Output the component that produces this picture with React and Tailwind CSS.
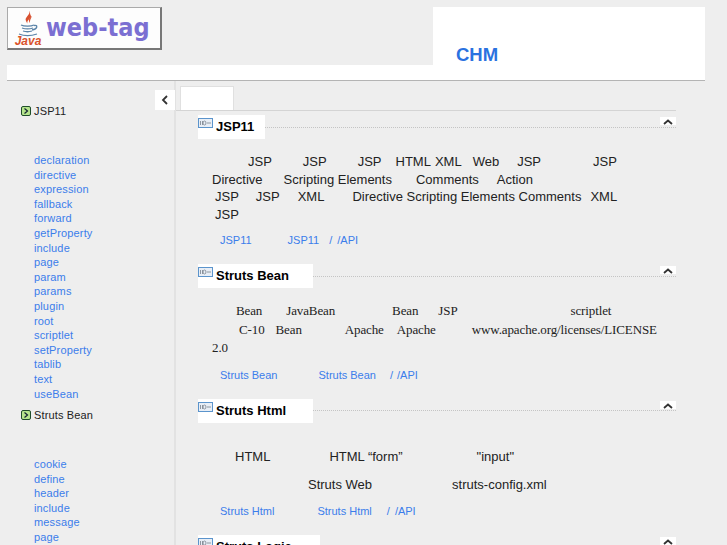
import React from 'react'

const TreeIcon = () => (
  <svg width="10" height="10" viewBox="0 0 10 10" className="shrink-0">
    <rect x="0.5" y="0.5" width="9" height="9" rx="1.5" fill="#b5e48c" stroke="#1f4d2a" />
    <path d="M3.5 2.5 L6.5 5 L3.5 7.5" fill="none" stroke="#123" strokeWidth="1.2" />
  </svg>
)

const SectionIcon = () => (
  <svg width="15" height="10" viewBox="0 0 15 10" className="shrink-0">
    <rect x="0.5" y="0.5" width="14" height="9" fill="#e8eef6" stroke="#5b94cc" />
    <path d="M2.5 3 v4 M4.5 3 v4 M6.5 3 a1.5 2 0 1 1 0 4 a1.5 2 0 1 1 0 -4 M9 5 h4" fill="none" stroke="#77808c" strokeWidth="0.8" />
  </svg>
)

const Chevron = () => (
  <svg width="10" height="6" viewBox="0 0 10 6">
    <path d="M1 5 L5 1.5 L9 5" fill="none" stroke="#333" strokeWidth="1.8" />
  </svg>
)

const JavaLogo = () => (
  <div className="flex flex-col items-center w-[24px] shrink-0">
    <svg width="24" height="27" viewBox="0 0 24 27">
      <path d="M13 1 C15 5 8 7 10 11 C10.500 12 11 13 11.500 13.500 C10 10 17 8 14.500 5 C14 3.500 14 2 13 1Z" fill="#d8502f" />
      <path d="M16 6 C13 8 12 10 14 13 C13.500 10.500 15 8.500 16 6Z" fill="#d8502f" />
      <g fill="none" stroke="#5a83a8" strokeWidth="1.3">
        <path d="M5 15 C8 16.500 15 16.500 18 15" />
        <path d="M6 18 C9 19 14 19 17 18" />
        <path d="M7 21 C10 22 13 22 16 21" />
        <path d="M3 24 C8 26 15 26 21 24" />
        <path d="M18 15.500 C22 14.500 22 19 16 20" />
      </g>
    </svg>
    <span className="font-['Liberation_Sans',sans-serif] font-bold italic text-[12px] leading-[11px] text-[#d9532c] -mt-px">Java</span>
  </div>
)

const SideTitle = ({ children }) => (
  <div className="flex items-center gap-[3px] pl-[21px] h-[14px] text-[11px] leading-[14px] text-[#222] tracking-[0.15px]">
    <TreeIcon />
    <span>{children}</span>
  </div>
)

const SideLinks = ({ items }) => (
  <ul className="pl-[34px]">
    {items.map((t, i) => (
      <li key={i} className="h-[14.6px] text-[11px] leading-[14.6px] text-[#3b7deb] tracking-[0.15px]">{t}</li>
    ))}
  </ul>
)

const SectionHead = ({ title, width }) => (
  <div className="relative flex items-center">
    <div className={`flex items-start bg-white h-[24px] ${width}`}>
      <div className="mt-[3px]"><SectionIcon /></div>
      <span className="ml-[3px] mt-[4px] text-[13px] leading-[16px] font-bold text-black whitespace-nowrap">{title}</span>
    </div>
    <div className="flex-1 border-t border-dotted border-[#c4c4c4]" />
    <div className="absolute right-0 top-[2px] flex justify-center items-end bg-white w-[16px] h-[8px]">
      <Chevron />
    </div>
  </div>
)

// blank gaps stand for the glyphs the page had no font for
const Line = ({ pl, words, className }) => (
  <div className={`whitespace-nowrap h-[17.500px] ${className || ''}`} style={{ paddingLeft: pl }}>
    {words.map(([gap, w], i) => (
      <span key={i} style={{ marginLeft: gap }}>{w}</span>
    ))}
  </div>
)

const LinkLine = ({ words }) => (
  <div className="whitespace-nowrap text-[11px] leading-[14px] text-[#3b7deb]">
    {words.map(([gap, w], i) => (
      <span key={i} style={{ marginLeft: gap }}>{w}</span>
    ))}
  </div>
)

export default function App() {
  return (
    <div className="w-[727px] h-[545px] overflow-hidden bg-[#eeeeee] font-['Liberation_Sans',Arial,sans-serif]">
      {/* header */}
      <div className="ml-[7px] w-[698px] h-[81px] pt-[7px] flex items-stretch border-b border-[#b4b4b4]">
        <div className="w-[426px] flex flex-col">
          <div className="flex items-center gap-[6px] w-[155px] h-[43px] pl-[8px] bg-[#fdfdfd] border border-[#aaa] border-r-2 border-b-2 border-r-[#777] border-b-[#777]">
            <JavaLogo />
            <span className="font-['DejaVu_Sans_Condensed','DejaVu_Sans',sans-serif] font-bold text-[25px] leading-[28px] text-[#7b6fd2] whitespace-nowrap">web-tag</span>
          </div>
          <div className="mt-auto h-[15px] bg-white" />
        </div>
        <div className="flex-1 bg-white pl-[23px] pt-[37px] text-[18.500px] leading-[22px] font-bold text-[#2a72e0]">CHM</div>
      </div>

      <div className="flex h-[464px]">
        {/* sidebar */}
        <div className="relative w-[176px] shrink-0 border-r-2 border-[#e2e2e2] pt-[23px]">
          <div className="absolute right-[-1px] top-[9px] w-[20px] h-[20px] bg-white flex items-center justify-center">
            <svg width="8" height="10" viewBox="0 0 8 10"><path d="M6 1 L2 5 L6 9" fill="none" stroke="#333" strokeWidth="1.8" /></svg>
          </div>
          <SideTitle>JSP11</SideTitle>
          <div className="mt-[35px]">
            <SideLinks items={['declaration', 'directive', 'expression', 'fallback', 'forward', 'getProperty', 'include', 'page', 'param', 'params', 'plugin', 'root', 'scriptlet', 'setProperty', 'tablib', 'text', 'useBean']} />
          </div>
          <div className="mt-[7px]"><SideTitle>Struts Bean</SideTitle></div>
          <div className="mt-[35px]">
            <SideLinks items={['cookie', 'define', 'header', 'include', 'message', 'page']} />
          </div>
        </div>

        {/* content */}
        <div className="flex-1 min-w-0">
          <div className="ml-[4px] mt-[5px] w-[54px] h-[24px] bg-white border border-b-0 border-[#e0e0e0]" />
          <div className="w-[500px] border-t border-[#d4d4d4]" />
          <div className="pl-[22px] w-[500px] pt-[4px]">
            <SectionHead title="JSP11" width="w-[67px]" />
            <div className="mt-[14px] text-[13px] leading-[17.500px] text-[#222]">
              <Line pl={0} words={[['50px', 'JSP'], ['31px', 'JSP'], ['31px', 'JSP'], ['14px', 'HTML'], ['4px', 'XML'], ['11px', 'Web'], ['18px', 'JSP'], ['52px', 'JSP']]} />
              <Line pl={14} words={[['0', 'Directive'], ['21px', 'Scripting Elements'], ['24px', 'Comments'], ['18px', 'Action']]} />
              <Line pl={17} words={[['0', 'JSP'], ['17px', 'JSP'], ['18px', 'XML'], ['28px', 'Directive Scripting Elements Comments'], ['9px', 'XML']]} />
              <Line pl={17} words={[['0', 'JSP']]} />
            </div>
            <div className="mt-[10px]"><LinkLine words={[['22px', 'JSP11'], ['36px', 'JSP11'], ['10px', '/'], ['5px', '/API']]} /></div>

            <div className="mt-[17px]"><SectionHead title="Struts Bean" width="w-[115px]" /></div>
            <div className="mt-[14px] font-['Liberation_Serif',serif] text-[13px] leading-[18.500px] text-[#222] tracking-[-0.12px]">
              <Line pl={0} className="h-[18.500px]" words={[['38px', 'Bean'], ['24px', 'JavaBean'], ['57px', 'Bean'], ['20px', 'JSP'], ['113px', 'scriptlet']]} />
              <Line pl={0} className="h-[18.500px]" words={[['41px', 'C-10'], ['11px', 'Bean'], ['43px', 'Apache'], ['13px', 'Apache'], ['36px', 'www.apache.org/licenses/LICENSE']]} />
              <Line pl={14} className="h-[18.500px]" words={[['0', '2.0']]} />
            </div>
            <div className="mt-[10px]"><LinkLine words={[['22px', 'Struts Bean'], ['41px', 'Struts Bean'], ['14px', '/'], ['4px', '/API']]} /></div>

            <div className="mt-[17px]"><SectionHead title="Struts Html" width="w-[115px]" /></div>
            <div className="mt-[20px] text-[13px] leading-[28px] text-[#222]">
              <Line pl={0} className="h-[28px]" words={[['37px', 'HTML'], ['59px', 'HTML “form”'], ['74px', '"input"']]} />
              <Line pl={0} className="h-[28px]" words={[['110px', 'Struts Web'], ['80px', 'struts-config.xml']]} />
            </div>
            <div className="mt-[5px]"><LinkLine words={[['22px', 'Struts Html'], ['43px', 'Struts Html'], ['15px', '/'], ['5px', '/API']]} /></div>

            <div className="mt-[17px]"><SectionHead title="Struts Logic" width="w-[122px]" /></div>
          </div>
        </div>
      </div>
    </div>
  )
}
